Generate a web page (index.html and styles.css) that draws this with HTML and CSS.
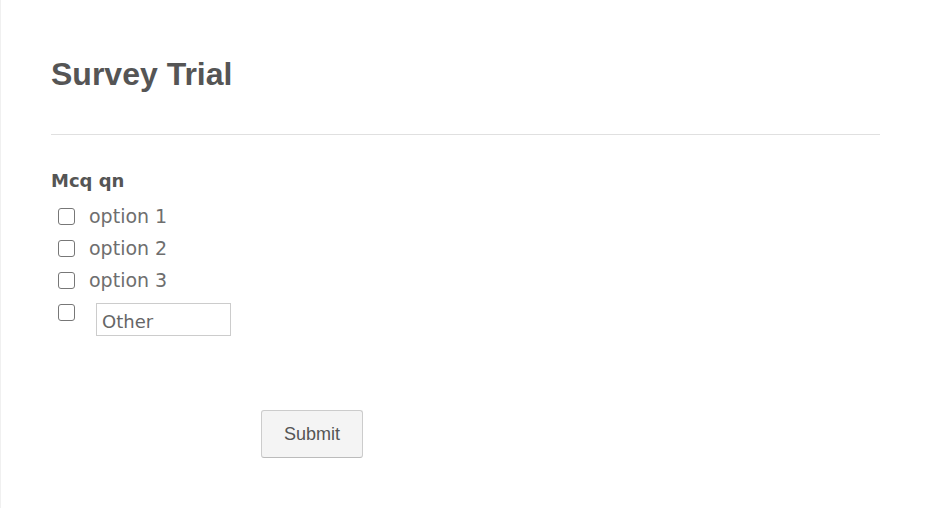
FILE: index.html
```html
<!DOCTYPE html>
<html lang="en">
<head>
  <meta charset="UTF-8" />
  <title>Survey Trial</title>
  <link rel="stylesheet" href="styles.css">
</head>
<body>
  <div class="page">
    <h1>Survey Trial</h1>
    <hr class="divider">

    <form class="survey">
      <p class="question">Mcq qn</p>
      <label class="option"><input type="checkbox"> option 1</label>
      <label class="option"><input type="checkbox"> option 2</label>
      <label class="option"><input type="checkbox"> option 3</label>
      <div class="option other">
        <input type="checkbox">
        <input type="text" class="other-text" placeholder="Other">
      </div>

      <div class="actions">
        <button type="submit">Submit</button>
      </div>
    </form>
  </div>
</body>
</html>
```

FILE: styles.css
```css
body {
  margin: 0;
  background: #fff;
  border-left: 1px solid #f0f0f0;
  min-height: 508px;
  box-sizing: border-box;
}
.page {
  padding: 56px 50px 0 50px;
  width: 829px;
}
h1 {
  font-family: 'Liberation Sans', Arial, sans-serif;
  font-size: 32px;
  line-height: 36px;
  font-weight: bold;
  color: #555;
  margin: 0;
}
.divider {
  border: none;
  border-top: 1px solid #e0e0e0;
  margin: 42px 0 0;
}
.survey {
  font-family: 'DejaVu Sans', Verdana, sans-serif;
  color: #6e6e6e;
  font-size: 19px;
}
.question {
  font-size: 18px;
  font-weight: bold;
  color: #555;
  margin: 34px 0 7px;
  line-height: 24px;
}
.option {
  display: flex;
  align-items: center;
  gap: 14px;
  height: 32px;
  padding-left: 7px;
}
.option input[type="checkbox"] {
  appearance: none;
  width: 17px;
  height: 17px;
  margin: 0;
  border: 1.5px solid #777;
  border-radius: 3px;
  background: #fff;
  box-sizing: border-box;
}
.option.other {
  align-items: flex-start;
  height: auto;
  padding-top: 8px;
  gap: 21px;
}
.other-text {
  font-family: 'DejaVu Sans', Verdana, sans-serif;
  font-size: 18px;
  width: 135px;
  height: 33px;
  box-sizing: border-box;
  border: 1px solid #ccc;
  padding: 4px 5px 0;
  margin-top: -1px;
  color: #666;
}
.other-text::placeholder {
  color: #666;
}
.actions {
  margin: 74px 0 0 210px;
}
button {
  font-family: 'Liberation Sans', Arial, sans-serif;
  font-size: 18px;
  color: #555;
  background: #f4f4f4;
  border: 1px solid #ccc;
  border-bottom-color: #bbb;
  border-radius: 3px;
  width: 102px;
  height: 48px;
  cursor: pointer;
}
```
